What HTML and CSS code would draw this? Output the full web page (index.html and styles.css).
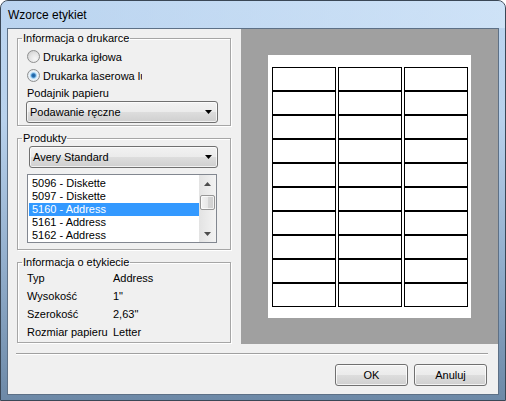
FILE: index.html
```html
<!DOCTYPE html>
<html lang="pl">
<head>
<meta charset="utf-8">
<title>Wzorce etykiet</title>
<link rel="stylesheet" href="styles.css">
</head>
<body>
<div class="window">
  <div class="titlebar"><span class="title">Wzorce etykiet</span></div>
  <div class="client">
    <div class="main">
      <div class="left">
        <fieldset class="group g1">
          <legend>Informacja o drukarce</legend>
          <label class="radio-row"><span class="radio"></span><span class="rlabel">Drukarka igłowa</span></label>
          <label class="radio-row"><span class="radio checked"></span><span class="rlabel clip">Drukarka laserowa lub atramentowa</span></label>
          <div class="field-label">Podajnik papieru</div>
          <div class="combo c1"><span class="combo-text">Podawanie ręczne</span><svg class="arrow" width="7" height="4" viewBox="0 0 7 4"><polygon points="0,0 7,0 3.5,4" fill="#000"/></svg></div>
        </fieldset>
        <fieldset class="group g2">
          <legend>Produkty</legend>
          <div class="combo c2"><span class="combo-text">Avery Standard</span><svg class="arrow" width="7" height="4" viewBox="0 0 7 4"><polygon points="0,0 7,0 3.5,4" fill="#000"/></svg></div>
          <div class="listbox">
            <ul class="items">
              <li>5096 - Diskette</li>
              <li>5097 - Diskette</li>
              <li class="selected">5160 - Address</li>
              <li>5161 - Address</li>
              <li>5162 - Address</li>
            </ul>
            <div class="scrollbar">
              <div class="sb-btn"><svg width="7" height="4" viewBox="0 0 7 4"><polygon points="0,4 7,4 3.5,0" fill="#4d4d4d"/></svg></div>
              <div class="sb-track"><div class="sb-thumb"></div></div>
              <div class="sb-btn"><svg width="7" height="4" viewBox="0 0 7 4"><polygon points="0,0 7,0 3.5,4" fill="#4d4d4d"/></svg></div>
            </div>
          </div>
        </fieldset>
        <fieldset class="group g3">
          <legend>Informacja o etykiecie</legend>
          <div class="info-row"><span class="k">Typ</span><span class="v">Address</span></div>
          <div class="info-row"><span class="k">Wysokość</span><span class="v">1"</span></div>
          <div class="info-row"><span class="k">Szerokość</span><span class="v">2,63"</span></div>
          <div class="info-row"><span class="k">Rozmiar papieru</span><span class="v">Letter</span></div>
        </fieldset>
      </div>
      <div class="preview">
        <div class="paper">
          <div class="sheet">
            <div class="cell"></div><div class="cell"></div><div class="cell"></div>
            <div class="cell"></div><div class="cell"></div><div class="cell"></div>
            <div class="cell"></div><div class="cell"></div><div class="cell"></div>
            <div class="cell"></div><div class="cell"></div><div class="cell"></div>
            <div class="cell"></div><div class="cell"></div><div class="cell"></div>
            <div class="cell"></div><div class="cell"></div><div class="cell"></div>
            <div class="cell"></div><div class="cell"></div><div class="cell"></div>
            <div class="cell"></div><div class="cell"></div><div class="cell"></div>
            <div class="cell"></div><div class="cell"></div><div class="cell"></div>
            <div class="cell"></div><div class="cell"></div><div class="cell"></div>
          </div>
        </div>
      </div>
    </div>
    <div class="separator"></div>
    <div class="buttons">
      <button class="btn">OK</button>
      <button class="btn">Anuluj</button>
    </div>
  </div>
</div>
</body>
</html>
```
FILE: styles.css
```css
html, body {
  margin: 0;
  padding: 0;
  background: #ffffff;
}
body {
  font-family: "Liberation Sans", Arial, sans-serif;
  font-size: 11px;
  color: #000;
}
.window {
  width: 506px;
  height: 401px;
  box-sizing: border-box;
  border: 1px solid #3a4756;
  border-radius: 8px 8px 0 0;
  background: linear-gradient(to bottom, #bcd5f0 0%, #b8d1ec 30%, #93afcd 65%, #6d89a7 100%);
  display: flex;
  flex-direction: column;
  overflow: hidden;
}
.titlebar {
  height: 27px;
  flex: none;
  padding-left: 7px;
  background: linear-gradient(to right, rgba(185,211,239,0.6), rgba(214,232,250,0.7));
  display: flex;
  align-items: center;
}
.title {
  font-size: 12px;
  line-height: 14px;
  padding-top: 1px;
  color: #000;
}
.client {
  margin: 0 6px 5px 6px;
  border: 1px solid #5d7086;
  background: #f0f0f0;
  height: 365px;
  display: flex;
  flex-direction: column;
}
.main {
  display: flex;
  height: 315px;
  flex: none;
}
.left {
  width: 233px;
  flex: none;
  padding-top: 3px;
  box-sizing: border-box;
}
.group {
  margin: 0 0 0 9px;
  width: 214px;
  box-sizing: border-box;
  border: 1px solid #a6a6a6;
  box-shadow: 1px 1px 0 #ffffff, inset 1px 1px 0 #ffffff;
  padding: 0;
  min-width: 0;
}
.group legend {
  margin-left: 4px;
  padding: 0 1px;
  line-height: 13px;
  font-size: 11px;
}
.g1 {
  padding: 2px 0 2px 0;
}
.g2 {
  margin-top: 6px;
  padding: 1px 0 6px 0;
}
.g3 {
  margin-top: 6px;
  padding: 0 0 1px 0;
}
.radio-row {
  display: flex;
  align-items: center;
  height: 19px;
  padding-left: 9px;
}
.radio {
  width: 13px;
  height: 13px;
  box-sizing: border-box;
  border-radius: 50%;
  border: 1px solid #8e8f8f;
  background: radial-gradient(circle at 65% 70%, #f6f6f6 0%, #e6e6e6 45%, #c8c8c8 100%);
  flex: none;
}
.radio.checked {
  background: radial-gradient(circle at 50% 50%, #1f5f9c 0%, #2a73b6 22%, #8fc8ef 34%, #e9f3fb 50%, #dcdcdc 100%);
}
.rlabel {
  margin-left: 3px;
  white-space: nowrap;
}
.rlabel.clip {
  width: 99px;
  overflow: hidden;
}
.field-label {
  height: 16px;
  line-height: 16px;
  padding-left: 9px;
}
.combo {
  height: 22px;
  box-sizing: border-box;
  border: 1px solid #707070;
  border-radius: 3px;
  background: linear-gradient(to bottom, #f2f2f2 0%, #ebebeb 50%, #dddddd 51%, #cfcfcf 100%);
  box-shadow: inset 0 0 0 1px rgba(255,255,255,0.7);
  display: flex;
  align-items: center;
  justify-content: space-between;
  padding: 0 5px 0 3px;
}
.c1 {
  margin-left: 8px;
  width: 192px;
}
.c2 {
  margin-left: 11px;
  width: 189px;
}
.combo-text {
  white-space: nowrap;
}
.arrow {
  display: block;
  flex: none;
}
.listbox {
  margin: 6px 0 0 9px;
  width: 190px;
  height: 69px;
  box-sizing: border-box;
  border: 1px solid #828790;
  background: #fff;
  display: flex;
}
.items {
  list-style: none;
  margin: 0;
  padding: 2px 0 0 1px;
  flex: 1;
  overflow: hidden;
}
.items li {
  height: 13px;
  line-height: 13px;
  padding-left: 3px;
  white-space: nowrap;
}
.items li.selected {
  background: #3399ff;
  color: #fff;
}
.scrollbar {
  width: 17px;
  flex: none;
  display: flex;
  flex-direction: column;
  background: linear-gradient(to right, #e3e3e3, #f3f3f3);
}
.sb-btn {
  height: 17px;
  display: flex;
  align-items: center;
  justify-content: center;
  flex: none;
}
.sb-btn svg {
  display: block;
}
.sb-track {
  flex: 1;
  padding-top: 3px;
}
.sb-thumb {
  margin: 0 1px;
  height: 15px;
  box-sizing: border-box;
  border: 1px solid #979797;
  border-radius: 2px;
  background: linear-gradient(to right, #f3f3f3 0%, #e8e8e8 50%, #d6d6d6 51%, #cfcfcf 100%);
  box-shadow: inset 0 0 0 1px rgba(255,255,255,0.7);
}
.info-row {
  display: flex;
  height: 18px;
  line-height: 18px;
  padding-left: 9px;
}
.info-row .k {
  width: 86px;
  flex: none;
  white-space: nowrap;
}
.preview {
  width: 257px;
  flex: none;
  background: #a0a0a0;
  display: flex;
  align-items: center;
  justify-content: center;
}
.paper {
  width: 203px;
  height: 263px;
  background: #fff;
  display: flex;
  align-items: center;
  justify-content: center;
}
.sheet {
  display: grid;
  grid-template-columns: repeat(3, 64px);
  grid-auto-rows: 24px;
  column-gap: 2px;
}
.cell {
  border: 1px solid #000;
}
.separator {
  margin: 9px 10px 0 8px;
  height: 1px;
  border-top: 1px solid #a0a0a0;
  background: #ffffff;
  flex: none;
}
.buttons {
  display: flex;
  justify-content: flex-end;
  gap: 6px;
  margin-top: 9px;
  padding-right: 11px;
}
.btn {
  width: 73px;
  height: 22px;
  box-sizing: border-box;
  border: 1px solid #707070;
  border-radius: 3px;
  background: linear-gradient(to bottom, #f2f2f2 0%, #ebebeb 50%, #dddddd 51%, #cfcfcf 100%);
  box-shadow: inset 0 0 0 1px rgba(255,255,255,0.75);
  font-family: "Liberation Sans", Arial, sans-serif;
  font-size: 11px;
  color: #000;
  padding: 0;
}
```
